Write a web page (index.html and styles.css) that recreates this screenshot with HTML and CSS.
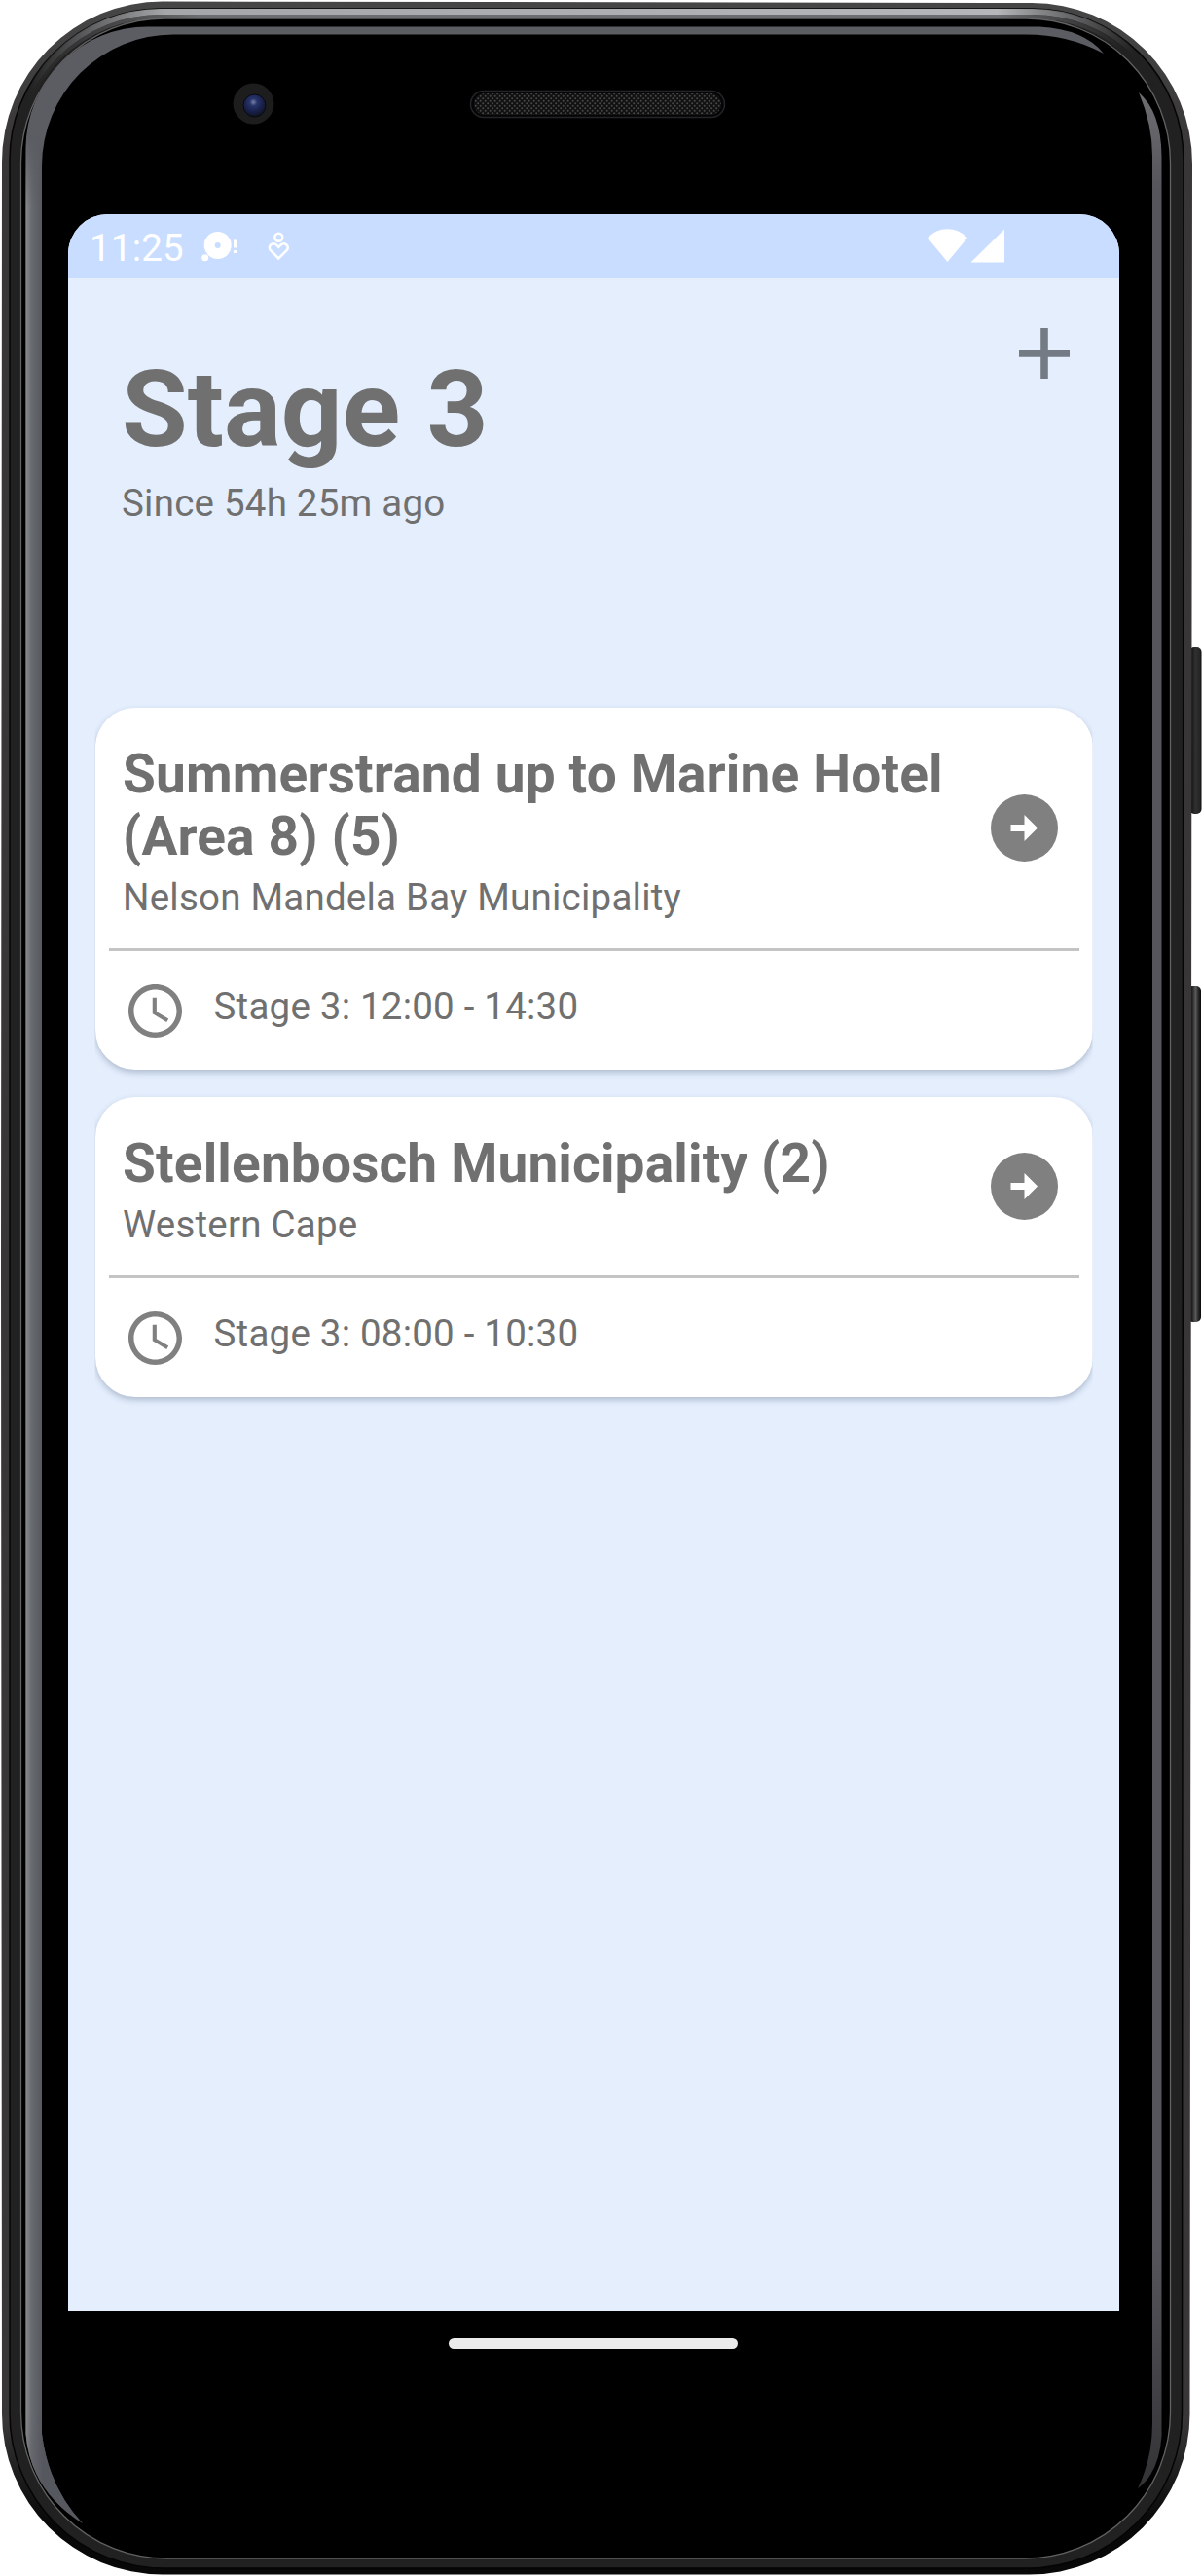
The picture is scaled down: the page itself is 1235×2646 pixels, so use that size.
FILE: index.html
```html
<!DOCTYPE html>
<html lang="en">
<head>
<meta charset="utf-8">
<title>Stage 3</title>
<link rel="stylesheet" href="styles.css">
</head>
<body>
<div class="device">
  <svg class="frame" viewBox="0 0 1235 2646" aria-hidden="true">
    <defs>
      <linearGradient id="rim" x1="0" y1="0" x2="0" y2="1"><stop offset="0" stop-color="#474646"/><stop offset=".06" stop-color="#383636"/><stop offset=".94" stop-color="#383636"/><stop offset=".98" stop-color="#080808"/></linearGradient>
      <linearGradient id="shine" gradientUnits="userSpaceOnUse" x1="30" y1="0" x2="1200" y2="0"><stop offset="0" stop-color="#b4b6b9" stop-opacity="0"/><stop offset=".12" stop-color="#a4a6a9"/><stop offset=".85" stop-color="#b4b6b9"/><stop offset=".97" stop-color="#b4b6b9" stop-opacity="0"/></linearGradient>
      <linearGradient id="shine-low" gradientUnits="userSpaceOnUse" x1="30" y1="0" x2="1200" y2="0"><stop offset="0" stop-color="#6c6d70" stop-opacity="0"/><stop offset=".15" stop-color="#6c6d70"/><stop offset=".85" stop-color="#6c6d70"/><stop offset=".96" stop-color="#6c6d70" stop-opacity="0"/></linearGradient>
      <linearGradient id="glass" gradientUnits="userSpaceOnUse" x1="26" y1="0" x2="44" y2="0"><stop offset="0" stop-color="#8b8d90"/><stop offset=".35" stop-color="#686b70"/><stop offset="1" stop-color="#54565d"/></linearGradient>
      <linearGradient id="fade" gradientUnits="userSpaceOnUse" x1="0" y1="140" x2="0" y2="2600"><stop offset="0" stop-color="#000"/><stop offset=".03" stop-color="#fff"/><stop offset=".95" stop-color="#fff"/><stop offset="1" stop-color="#777"/></linearGradient>
      <mask id="glass-fade" maskUnits="userSpaceOnUse" x="0" y="120" width="120" height="2500"><rect y="120" width="120" height="2500" fill="url(#fade)"/></mask>
      <linearGradient id="side" x1="0" y1="0" x2="0" y2="1"><stop offset="0" stop-color="#6d6d72"/><stop offset=".04" stop-color="#55555b"/><stop offset=".9" stop-color="#55555b"/><stop offset="1" stop-color="#333336"/></linearGradient>
      <linearGradient id="key" x1="0" y1="0" x2="1" y2="0"><stop offset="0" stop-color="#080808"/><stop offset=".5" stop-color="#303030"/><stop offset=".85" stop-color="#252525"/><stop offset="1" stop-color="#0a0a0a"/></linearGradient>
      <linearGradient id="key-bright" x1="0" y1="0" x2="1" y2="0"><stop offset="0" stop-color="#080808"/><stop offset=".35" stop-color="#222"/><stop offset=".6" stop-color="#5a5a5a"/><stop offset=".8" stop-color="#292929"/><stop offset="1" stop-color="#0a0a0a"/></linearGradient>
      <radialGradient id="lens" cx=".45" cy=".35" r=".65"><stop offset="0" stop-color="#7882a8"/><stop offset=".25" stop-color="#28356a"/><stop offset=".65" stop-color="#18204a"/><stop offset="1" stop-color="#10131d"/></radialGradient>
      <pattern id="mesh" width="5" height="5" patternUnits="userSpaceOnUse"><rect width="5" height="5" fill="#111"/><circle cx="1.2" cy="1.2" r="1" fill="#484848"/><circle cx="3.7" cy="3.7" r="1" fill="#484848"/></pattern>
    </defs>
    <rect x="1222" y="665" width="12.500" height="171" rx="5" fill="url(#key)"/>
    <rect x="1220" y="1013" width="14" height="345" rx="5" fill="url(#key-bright)"/>
    <path fill="url(#rim)" d="M2 167A165 165 0 0 1 167 1.500L1060 3A165 165 0 0 1 1225 168L1222.500 2479A165 165 0 0 1 1057 2644.500H167A165 165 0 0 1 2 2479L1 1300Z"/>
    <path fill="#212121" stroke="#050505" stroke-width="1.500" d="M10 164A155 155 0 0 1 165 9H1061A155 155 0 0 1 1216 164L1214.500 2479A159 159 0 0 1 1056 2638H169A159 159 0 0 1 10 2479Z"/>
    <path fill="#000" stroke="#626262" stroke-width="1.300" d="M21.500 167A148 148 0 0 1 169.500 19H1054A148 148 0 0 1 1202.500 167V2478A150 150 0 0 1 1052 2628H172A150 150 0 0 1 21.500 2478Z"/>
    <path fill="none" stroke="url(#shine)" stroke-width="6" d="M12 165A153 153 0 0 1 165 12H1061A153 153 0 0 1 1214 165"/>
    <path fill="none" stroke="url(#shine-low)" stroke-width="4" d="M16 166A149 149 0 0 1 165 17H1060A149 149 0 0 1 1209 166"/>
    <path fill="#5b5d63" d="M26.500 152A125 125 0 0 1 152 27.500H1068Q1114 30 1134 55Q1098 35.500 1054 35.500H178A135 135 0 0 0 43 170V2500Q50 2555 85 2592Q31 2558 26.500 2500Z"/>
    <path fill="url(#glass)" mask="url(#glass-fade)" d="M26.500 140H43V2500Q50 2555 85 2592Q31 2558 26.500 2500Z"/>
    <path fill="url(#side)" d="M1170 95Q1193 115 1193.500 160V2502Q1191 2540 1169 2556Q1184 2525 1184 2490V160Q1184 128 1170 95Z"/>
    <circle cx="260.500" cy="106.500" r="21" fill="#1d1d1e"/>
    <circle cx="261.500" cy="108.500" r="11.500" fill="url(#lens)" stroke="#090a0e"/>
    <rect x="483.500" y="93.500" width="261" height="27" rx="13.500" fill="#050505" stroke="#24242a" stroke-width="1.500"/>
    <rect x="487" y="96" width="254" height="22" rx="11" fill="url(#mesh)"/>
  </svg>
  <div class="phone">
    <main class="screen">
      <div class="status-bar">
        <span class="clock">11:25</span>
        <svg class="notices" viewBox="0 0 100 40" aria-hidden="true">
          <path fill="#fff" fill-rule="evenodd" d="M5.700 19a14 14 0 1 1 28 0a14 14 0 1 1-28 0ZM16.700 19a3 3 0 1 0 6 0a3 3 0 1 0-6 0Z"/>
          <circle cx="6.700" cy="31.700" r="3.500" fill="#fff"/>
          <path fill="#fff" d="M36 13.500h3v8h-3zM36 24h3v3h-3z"/>
          <circle cx="82.300" cy="10.700" r="4" fill="none" stroke="#fff" stroke-width="2.500"/>
          <path fill="none" stroke="#fff" stroke-width="2.500" d="M82.300 32.500L74.300 24.500C70 20 76.500 15 80 18.500L82.300 20.800L84.600 18.500C88.100 15 94.600 20 90.300 24.500Z"/>
        </svg>
        <svg class="signals" viewBox="0 0 80 36" aria-hidden="true">
          <path fill="#fff" d="M0 9.300Q8.500.300 20.500.300T41 9.300L20.500 34ZM44.500 34.500L79 .500V34.500Z"/>
        </svg>
      </div>
      <header class="header">
        <div>
          <h1 class="stage">Stage 3</h1>
          <p class="since">Since 54h 25m ago</p>
        </div>
        <svg class="add" viewBox="0 0 52 52" aria-hidden="true"><path fill="#757b84" d="M22.200 0h7.600v22.200H52v7.600H29.800V52h-7.600V29.800H0v-7.600h22.200z"/></svg>
      </header>
      <div class="areas">
        <article class="card">
          <div class="card-head">
            <div>
              <h2 class="title">Summerstrand up to Marine Hotel (Area 8) (5)</h2>
              <p class="region">Nelson Mandela Bay Municipality</p>
            </div>
            <svg class="go" viewBox="0 0 69 69" aria-hidden="true"><circle cx="34.500" cy="34.500" r="34.500" fill="#808080"/><path fill="#fff" d="M20.500 31h14V21l13.600 13.500L34.500 48V38h-14z"/></svg>
          </div>
          <div class="slot">
            <svg class="time-icon" viewBox="2 2 20 20" aria-hidden="true"><path fill="#808080" d="M11.990 2C6.470 2 2 6.480 2 12s4.470 10 9.990 10C17.520 22 22 17.520 22 12S17.520 2 11.990 2zM12 20c-4.420 0-8-3.580-8-8s3.580-8 8-8 8 3.580 8 8-3.580 8-8 8zM12.500 7H11v6l5.250 3.150.75-1.230-4.500-2.670z"/></svg>
            <span>Stage 3: 12:00 - 14:30</span>
          </div>
        </article>
        <article class="card">
          <div class="card-head">
            <div>
              <h2 class="title">Stellenbosch Municipality (2)</h2>
              <p class="region">Western Cape</p>
            </div>
            <svg class="go" viewBox="0 0 69 69" aria-hidden="true"><circle cx="34.500" cy="34.500" r="34.500" fill="#808080"/><path fill="#fff" d="M20.500 31h14V21l13.600 13.500L34.500 48V38h-14z"/></svg>
          </div>
          <div class="slot">
            <svg class="time-icon" viewBox="2 2 20 20" aria-hidden="true"><path fill="#808080" d="M11.990 2C6.470 2 2 6.480 2 12s4.470 10 9.990 10C17.520 22 22 17.520 22 12S17.520 2 11.990 2zM12 20c-4.420 0-8-3.580-8-8s3.580-8 8-8 8 3.580 8 8-3.580 8-8 8zM12.500 7H11v6l5.250 3.150.75-1.230-4.500-2.670z"/></svg>
            <span>Stage 3: 08:00 - 10:30</span>
          </div>
        </article>
      </div>
    </main>
    <div class="home-pill"></div>
  </div>
</div>
</body>
</html>
```

FILE: styles.css
```css
* { box-sizing: border-box; }
body { margin: 0; background: #fff; color: #707070; font: 38.5px/45px Roboto, sans-serif; letter-spacing: .22px; }
h1, h2, p { margin: 0; }
svg { display: block; flex: none; }

.device { display: grid; width: 1235px; height: 2646px; }
.frame { grid-area: 1 / 1; width: 1235px; height: 2646px; }
.phone { grid-area: 1 / 1; padding: 220px 85px 0 70px; }

.screen { height: 2154px; background: #e4eefd; border-radius: 41px 41px 0 0; overflow: hidden; }
.status-bar { display: flex; height: 66px; padding: 0 117px 0 22px; background: #c8ddff; color: #fff; }
.clock { width: 112px; padding-top: 12px; }
.notices { width: 100px; height: 40px; margin-top: 13px; }
.signals { width: 80px; height: 36px; margin: 15px 0 0 auto; }

.header { display: flex; justify-content: space-between; height: 441px; padding: 51px 51px 0 55px; }
.stage { margin-top: 19px; font-size: 110px; line-height: 129px; font-weight: 700; letter-spacing: 0; }
.since { margin-top: 9px; }
.add { width: 52px; height: 52px; }

.areas { display: flex; flex-direction: column; gap: 28px; margin: 0 27.5px; padding-bottom: 10px; clip-path: inset(-10px 0 0 0); }
.card { background: #fff; border-radius: 41px; box-shadow: 0 3px 6px rgba(40, 60, 90, .28); }
.card-head { display: flex; align-items: center; justify-content: space-between; margin: 0 14px; padding: 36px 22px 30px 14.5px; border-bottom: 3px solid #c4c4c4; }
.title { width: 860px; font-size: 55px; line-height: 64px; font-weight: 700; letter-spacing: .15px; }
.region { margin-top: 8px; }
.go { width: 69px; height: 69px; margin-bottom: 6px; }
.slot { display: flex; gap: 33px; height: 122px; padding: 34px 34px 0; }
.time-icon { width: 55px; height: 55px; }
.home-pill { width: 297px; height: 11px; margin: 27.5px 0 0 391px; background: #ebebeb; border-radius: 6px; }
```
